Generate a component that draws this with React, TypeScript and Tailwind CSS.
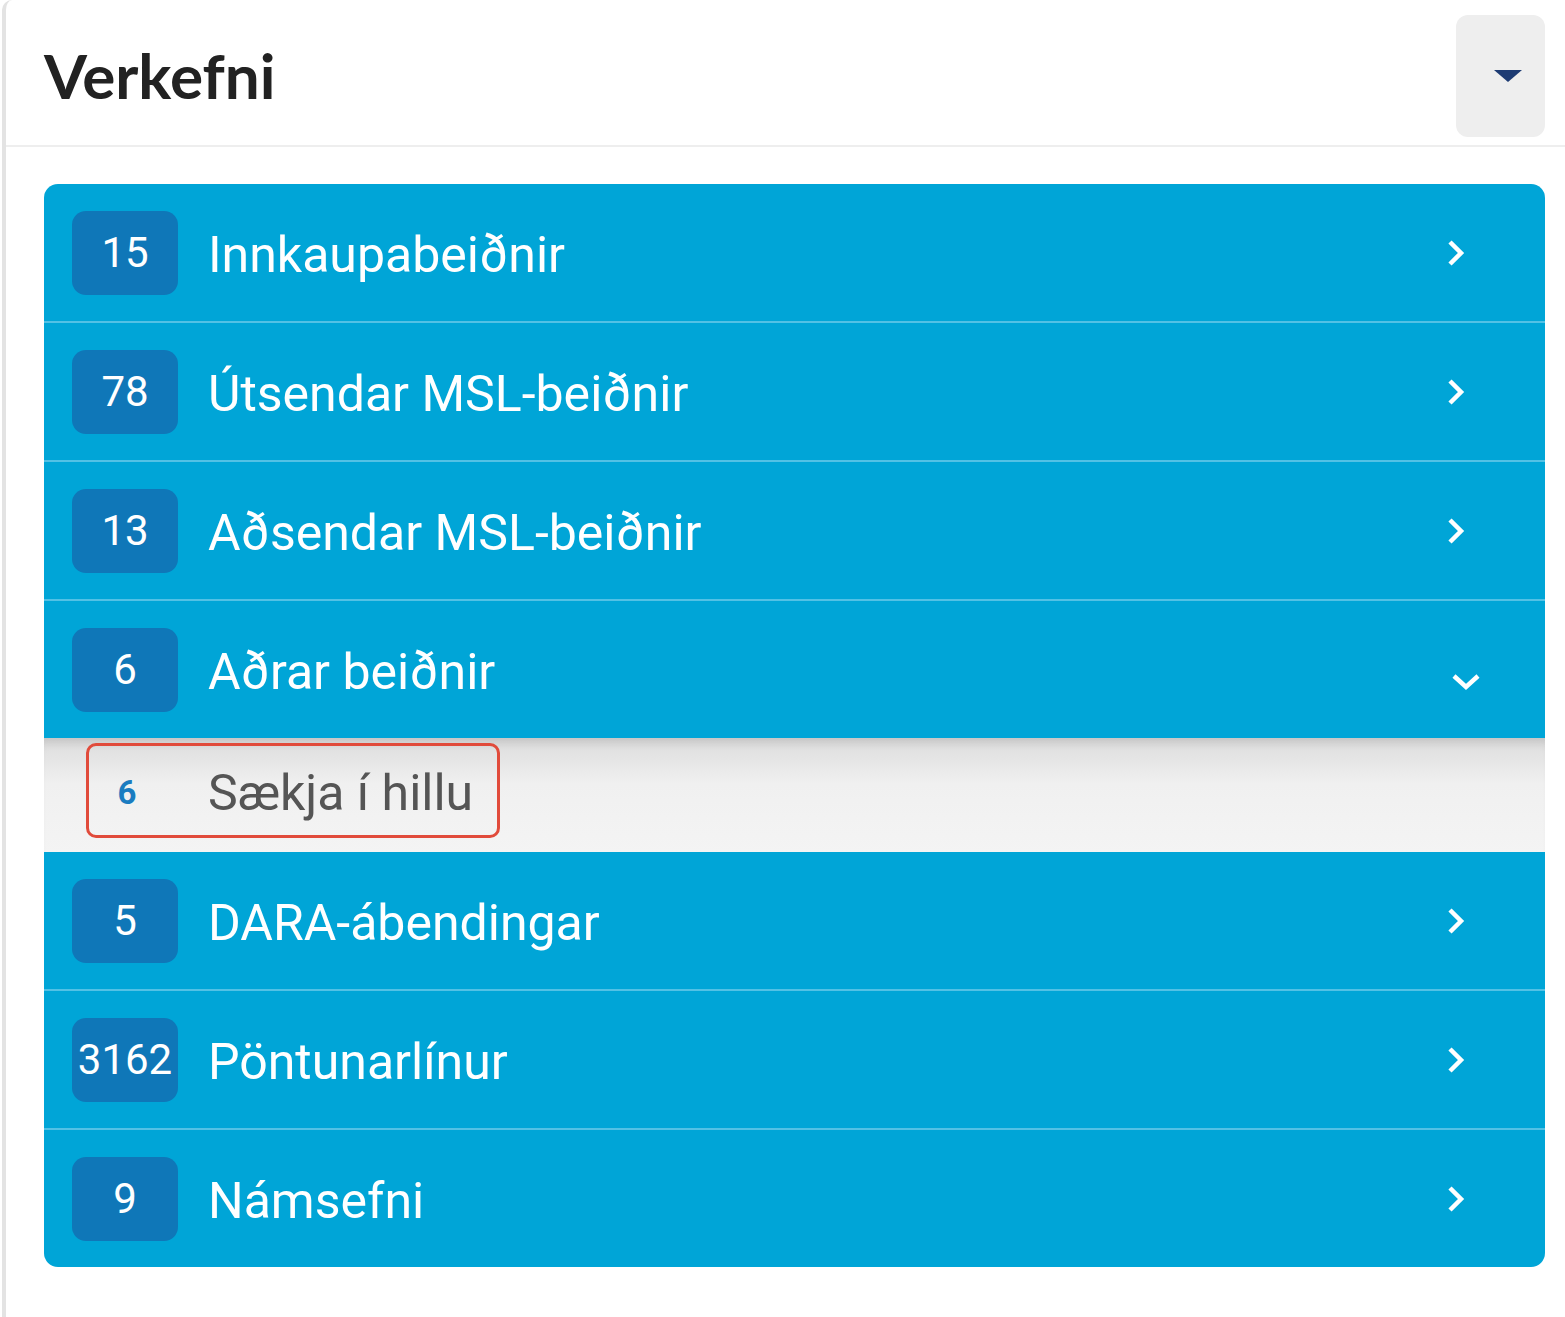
import { Fragment } from "react";

interface Task {
  count: number;
  label: string;
  open?: boolean;
  children?: { count: number; label: string }[];
}

const tasks: Task[] = [
  { count: 15, label: "Innkaupabeiðnir" },
  { count: 78, label: "Útsendar MSL-beiðnir" },
  { count: 13, label: "Aðsendar MSL-beiðnir" },
  { count: 6, label: "Aðrar beiðnir", open: true, children: [{ count: 6, label: "Sækja í hillu" }] },
  { count: 5, label: "DARA-ábendingar" },
  { count: 3162, label: "Pöntunarlínur" },
  { count: 9, label: "Námsefni" },
];

function ChevronRight() {
  return (
    <svg width="20" height="30" viewBox="0 0 20 30" fill="none">
      <path d="M4 4 L15 15 L4 26" stroke="white" strokeWidth="4.5" strokeLinejoin="miter" />
    </svg>
  );
}

function ChevronDown() {
  return (
    <svg width="32" height="20" viewBox="0 0 32 20" fill="none" className="translate-x-[10px] translate-y-[12px]">
      <path d="M4 4 L16 15 L28 4" stroke="white" strokeWidth="4.5" strokeLinejoin="miter" />
    </svg>
  );
}

function TaskRow({ task, first }: { task: Task; first: boolean }) {
  return (
    <div
      className={`flex items-center pl-[28px] pr-[69px] ${
        first ? "h-[137px]" : "h-[139px] border-t-2 border-[#52c1e5]"
      }`}
    >
      <span className="flex h-[84px] w-[106px] shrink-0 items-center justify-center rounded-[14px] bg-[#0f77b8] text-[42px] text-white">
        {task.count}
      </span>
      <span className="ml-[30px] flex-1 pt-[5px] text-[50px] leading-none text-white">{task.label}</span>
      <span className="flex w-10 justify-center">{task.open ? <ChevronDown /> : <ChevronRight />}</span>
    </div>
  );
}

export default function App() {
  return (
    <div className="h-[1317px] w-[1565px] bg-white pl-[2px] font-['Roboto',sans-serif]">
      <div className="flex h-full flex-col rounded-tl-[10px] border-l-[4px] border-[#e3e3e3]">
        <div className="flex h-[147px] items-center justify-between border-b-2 border-[#eeeeee] pl-[38px] pr-[20px] pt-[6px]">
          <h1 className="font-['Lato',sans-serif] text-[62px] font-bold text-[#222222]">Verkefni</h1>
          <button className="flex h-[122px] w-[89px] items-center justify-center rounded-[12px] bg-[#eeeeee]">
            <svg width="30" height="14" viewBox="0 0 30 14" className="translate-x-[7px]">
              <path d="M1 1 L29 1 L15 13 Z" fill="#1d3b73" />
            </svg>
          </button>
        </div>

        <div className="ml-[38px] mr-[20px] mt-[37px] overflow-hidden rounded-[14px] bg-[#00a5d7]">
          {tasks.map((task, i) => (
            <Fragment key={task.label}>
              <TaskRow task={task} first={i === 0 || tasks[i - 1].open === true} />
              {task.open && (
                <div className="h-[114px] bg-gradient-to-b from-[#dcdcdc] via-[#f0f0f0] via-40% to-[#f4f4f4] pl-[42px] pt-[5px] shadow-[inset_0_10px_10px_-6px_rgba(0,0,0,0.12)]">
                  {task.children?.map((c) => (
                    <div
                      key={c.label}
                      className="inline-flex h-[95px] items-center rounded-[10px] border-[3px] border-[#e14b3b] pr-[24px]"
                    >
                      <span className="w-[76px] pt-[4px] text-center text-[33px] font-bold text-[#1a7cc0]">{c.count}</span>
                      <span className="ml-[43px] pt-[5px] text-[50px] leading-none text-[#555555]">{c.label}</span>
                    </div>
                  ))}
                </div>
              )}
            </Fragment>
          ))}
        </div>
      </div>
    </div>
  );
}
